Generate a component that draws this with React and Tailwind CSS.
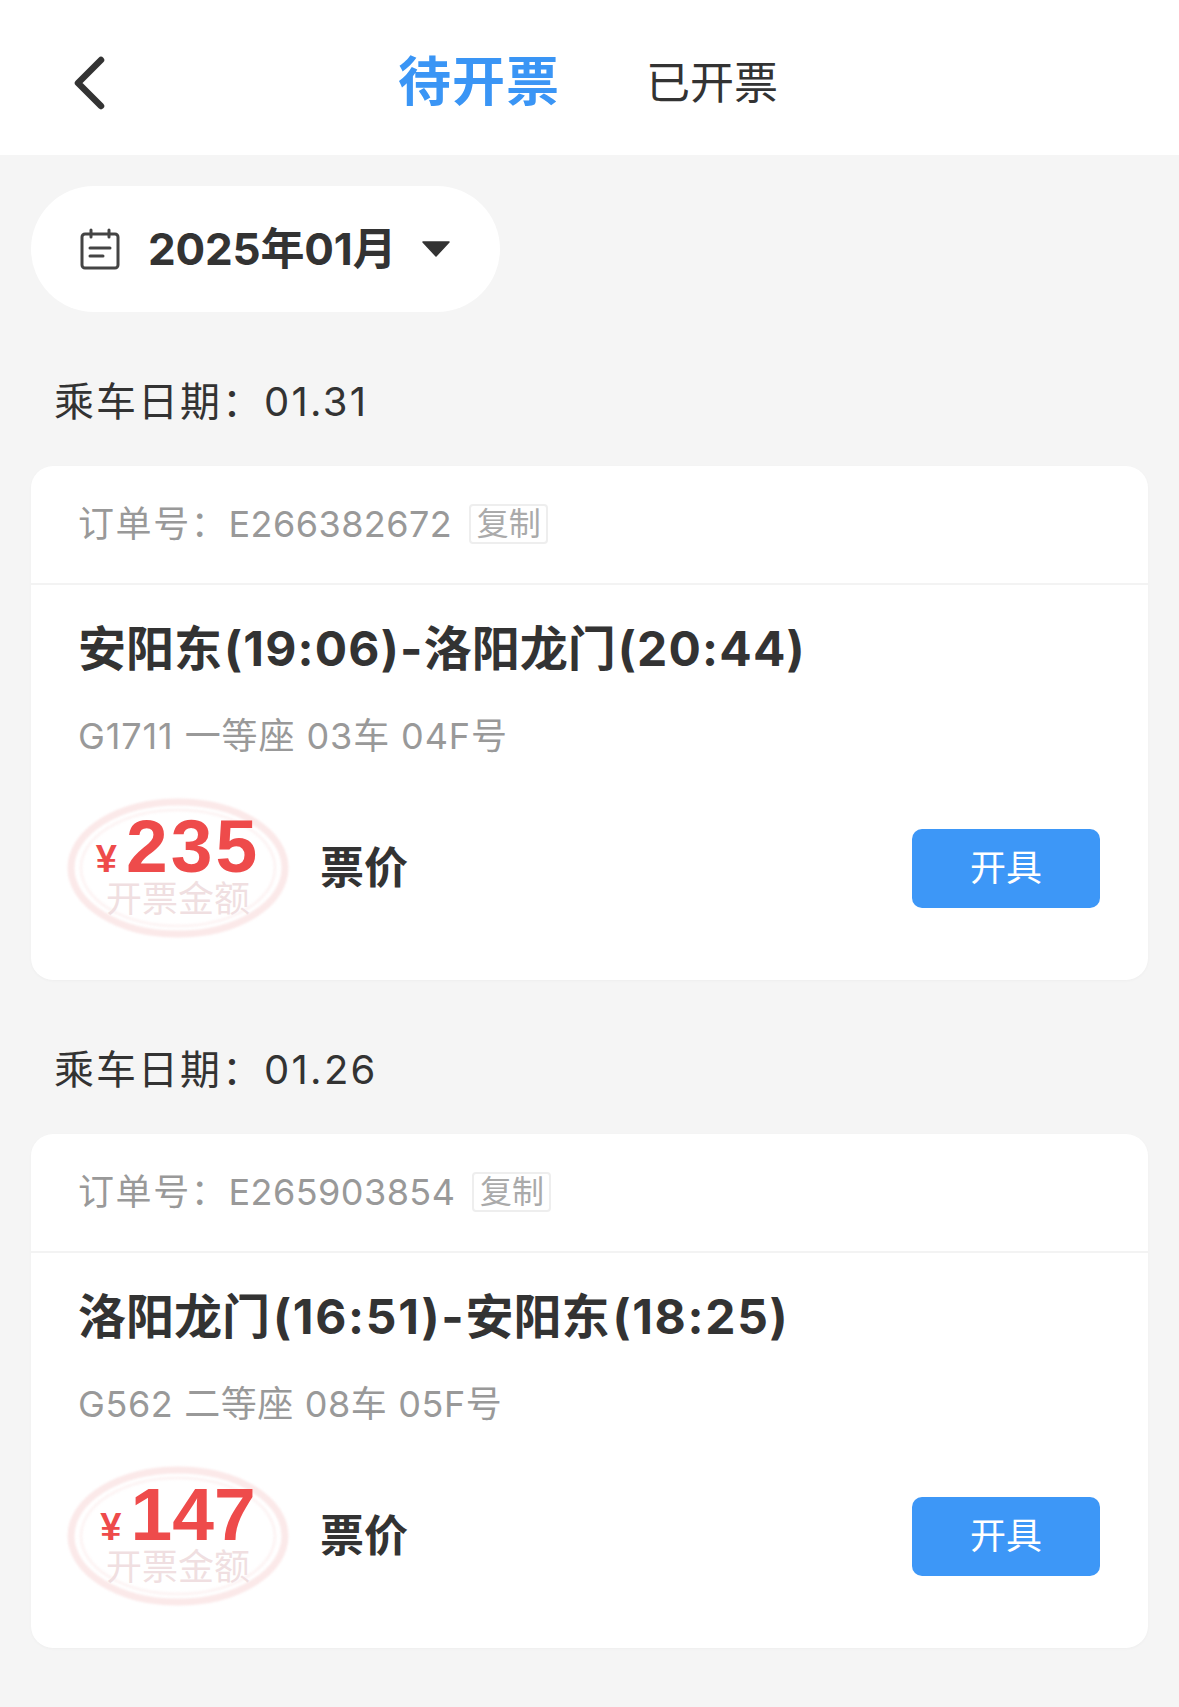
import React from "react";

const FONT = "font-['Inter','Noto_Sans_CJK_SC',sans-serif]";

function Stamp({ amount, digits }) {
  return (
    <div className="relative w-[224px] h-[140px] shrink-0 ml-[-12px]">
      <svg className="absolute inset-0 blur-[1px]" width="224" height="140" viewBox="0 0 224 140" fill="none">
        <ellipse cx="112" cy="70" rx="107" ry="66" stroke="#fbe9e9" strokeWidth="7" />
        <ellipse cx="112" cy="70" rx="97" ry="58" stroke="#fdf4f4" strokeWidth="3" />
      </svg>
      <div className="relative flex flex-col items-center">
        <div className="flex items-baseline h-[70px] mt-[13px] font-['Liberation_Sans',sans-serif] font-bold text-[#ee4b4b]">
          <span className="text-[38px] mr-[9px] leading-[70px]">¥</span>
          <span className={`text-[75px] leading-[70px] ${digits}`}>{amount}</span>
        </div>
        <div className="text-[36px] leading-[40px] text-[#f0dfe1] mt-[-2px]">开票金额</div>
      </div>
    </div>
  );
}

function Title({ text, latin }) {
  const parts = text.split(/([^\u4e00-\u9fff]+)/).filter(Boolean);
  return (
    <div className="mt-[34px] h-[60px] text-[48px] leading-[60px] font-bold text-[#333]">
      {parts.map((p, i) =>
        /[\u4e00-\u9fff]/.test(p) ? (
          <span key={i}>{p}</span>
        ) : (
          <span key={i} className={latin}>{p}</span>
        )
      )}
    </div>
  );
}

function Trip({ date, order, title, latin, sub, subTrack, amount, digits }) {
  return (
    <section>
      <div className="h-[44px] pl-[23px] text-[40px] leading-[44px] text-[#333]">
        <span className="tracking-[2px]">乘车日期：</span>
        <span className="tracking-[2.3px]">{date}</span>
      </div>
      <div className="mt-[42px] bg-white rounded-[22px] h-[514px] flex flex-col shadow-[0_1px_3px_rgba(0,0,0,0.03)]">
        <div className="h-[119px] border-b-2 border-[#f3f3f3] pl-[47px] pb-[2px] flex items-center">
          <span className="text-[36px] text-[#999]">
            <span className="tracking-[1.6px]">订单号：</span>
            <span className="tracking-[0.45px]">{order}</span>
          </span>
          <span className="ml-[17px] w-[79px] h-[40px] border-2 border-[#eee] rounded-[4px] text-[32px] leading-[36px] text-[#aaa] text-center">复制</span>
        </div>
        <div className="pl-[47px] pr-[48px] flex flex-col">
          <Title text={title} latin={latin} />
          <div className={`mt-[35px] h-[44px] text-[36px] leading-[44px] text-[#999] ${subTrack}`}>{sub}</div>
          <div className="mt-[40px] flex items-center">
            <Stamp amount={amount} digits={digits} />
            <span className="ml-[30px] text-[44px] font-bold text-[#333]">票价</span>
            <button className="ml-auto w-[188px] h-[79px] rounded-[10px] bg-[#3d97f7] text-white text-[36px]">开具</button>
          </div>
        </div>
      </div>
    </section>
  );
}

export default function App() {
  return (
    <div className={`${FONT} w-[1179px] h-[1707px] bg-[#f5f5f5] overflow-hidden`}>
      <header className="h-[155px] bg-white flex items-center pt-[10px]">
        <svg className="ml-[72px]" width="36" height="56" viewBox="0 0 36 56" fill="none">
          <path d="M29 5 L6 28 L29 51" stroke="#333" strokeWidth="6.5" strokeLinecap="round" strokeLinejoin="round" />
        </svg>
        <span className="ml-[290px] text-[53px] font-bold text-[#3a95f5] tracking-[1px]">待开票</span>
        <span className="ml-[86px] text-[44px] text-[#333]">已开票</span>
      </header>
      <main className="px-[31px]">
        <div className="mt-[31px] w-[469px] h-[126px] rounded-full bg-white flex items-center pl-[49px]">
          <svg width="40" height="42" viewBox="0 0 40 42" fill="none" stroke="#444" strokeWidth="3">
            <rect x="2" y="6" width="36" height="34" rx="3" />
            <path d="M11 2v7M29 2v7M10 20h20M10 28h13" strokeLinecap="round" />
          </svg>
          <span className="ml-[28px] text-[44px] font-bold text-[#333] tracking-[-0.2px]">2025年01月</span>
          <svg className="ml-[26px]" width="28" height="16" viewBox="0 0 28 16">
            <path d="M1 1h26L14 15z" fill="#333" stroke="#333" strokeWidth="1.5" strokeLinejoin="round" />
          </svg>
        </div>
        <div className="mt-[68px] flex flex-col gap-[68px]">
          <Trip date="01.31" order="E266382672" title="安阳东(19:06)-洛阳龙门(20:44)" latin="ml-[2px] tracking-[1.2px]" sub="G1711 一等座 03车 04F号" subTrack="tracking-[0.9px]" amount="235" digits="tracking-[3px]" />
          <Trip date="01.26" order="E265903854" title="洛阳龙门(16:51)-安阳东(18:25)" latin="ml-[3px] tracking-[1.7px]" sub="G562 二等座 08车 05F号" subTrack="tracking-[0.6px]" amount="147" digits="tracking-[0px]" />
        </div>
      </main>
    </div>
  );
}
